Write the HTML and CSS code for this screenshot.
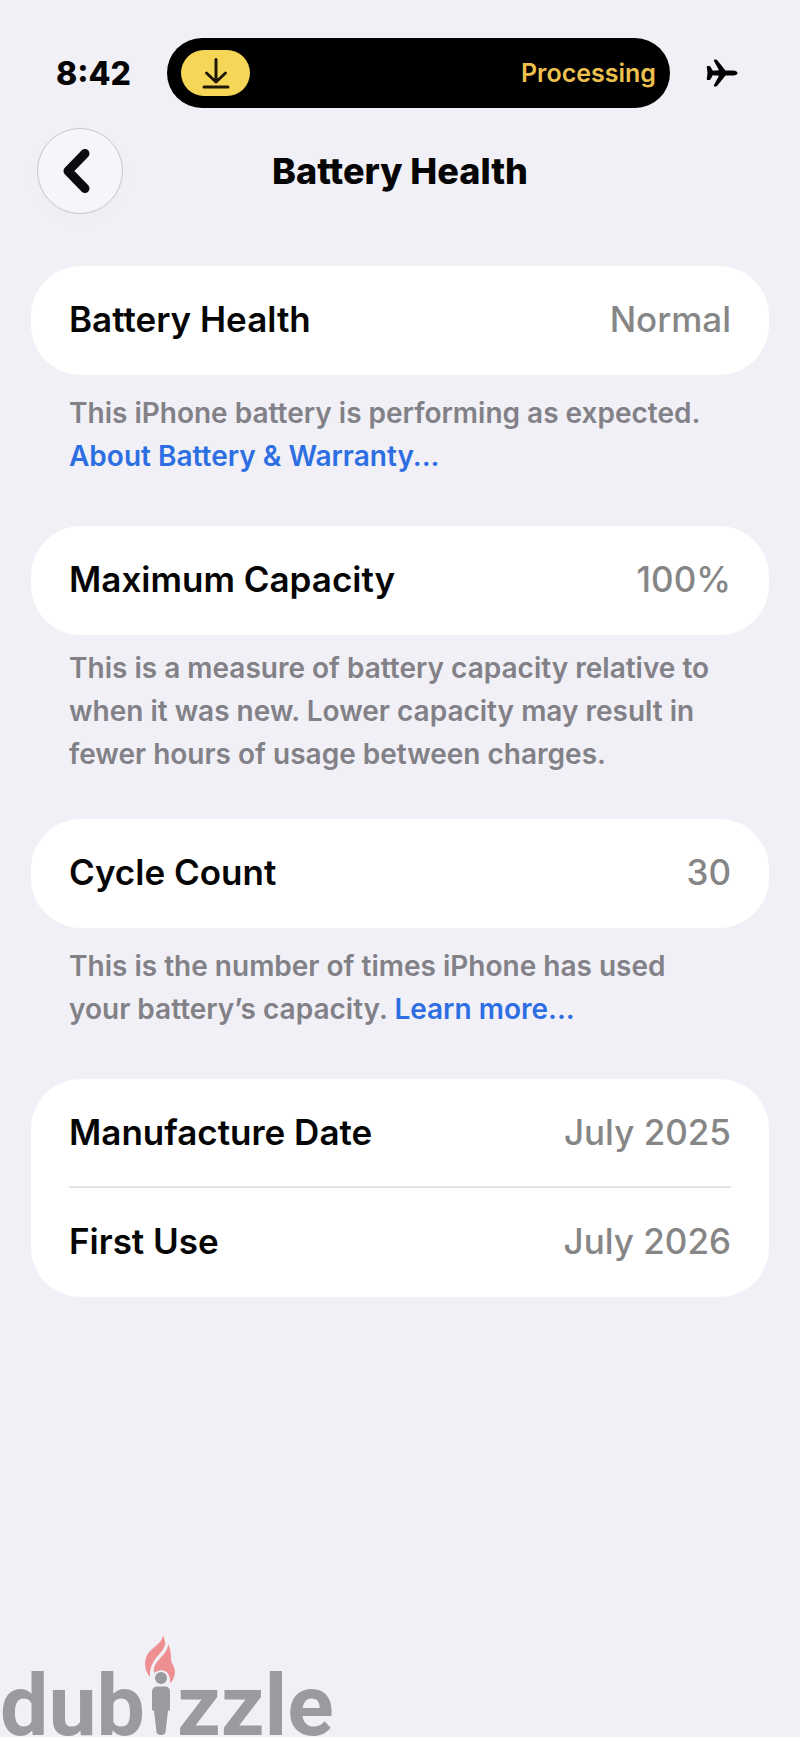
FILE: index.html
```
<!DOCTYPE html>
<html lang="en">
<head>
    <meta charset="UTF-8">
    <meta name="viewport" content="width=device-width, initial-scale=1.0">
    <title>Battery Health</title>
    <link rel="stylesheet" href="styles.css">
</head>
<body>

    <div class="status-bar">
        <time class="clock">8:42</time>
        <div class="island">
            <span class="island-pill">
                <svg width="28" height="32" viewBox="0 0 28 32" fill="none" stroke="#1c1805" stroke-width="3" stroke-linecap="round" stroke-linejoin="round">
                    <path d="M14 2.500V24.500M4.500 16L14 25L23.500 16M2 30H26" />
                </svg>
            </span>
            <span class="island-text">Processing</span>
        </div>
        <svg class="airplane" width="32" height="28" viewBox="0 0 32 28">
            <path d="M1.500 7H3.200Q4 7 4.500 7.700L6.800 11.700L13 11.300L8 2Q7.300 .5 8.800 .5H9.800Q10.600 .5 11.300 1.300L19.500 11.500H27Q31.500 12 31.500 14Q31.500 16 27 16.500H19.500L11.300 26.700Q10.600 27.500 9.800 27.500H8.800Q7.300 27.500 8 26L13 16.700L6.800 16.300L4.500 20.300Q4 21 3.200 21H1.500Q.8 21 .8 20L1.500 14L.8 8Q.8 7 1.500 7Z" />
        </svg>
    </div>

    <header class="nav-bar">
        <button class="back" type="button" aria-label="Back">
            <svg width="28" height="44" viewBox="0 0 28 44" fill="none" stroke="#0c0c0e" stroke-width="9" stroke-linecap="round" stroke-linejoin="round">
                <path d="M23 4.500L6 22L23 39.500" />
            </svg>
        </button>
        <h1>Battery Health</h1>
    </header>

    <main>
        <section>
            <dl class="card">
                <div class="row"><dt>Battery Health</dt><dd>Normal</dd></div>
            </dl>
            <p class="note">This iPhone battery is performing as expected. <a href="#warranty">About Battery &amp; Warranty...</a></p>
        </section>

        <section>
            <dl class="card">
                <div class="row"><dt>Maximum Capacity</dt><dd>100%</dd></div>
            </dl>
            <p class="note note-tight">This is a measure of battery capacity relative to when it was new. Lower capacity may result in fewer hours of usage between charges.</p>
        </section>

        <section>
            <dl class="card">
                <div class="row"><dt>Cycle Count</dt><dd>30</dd></div>
            </dl>
            <p class="note">This is the number of times iPhone has used your battery’s capacity. <a href="#cycles">Learn more...</a></p>
        </section>

        <section>
            <dl class="card">
                <div class="row"><dt>Manufacture Date</dt><dd>July 2025</dd></div>
                <div class="row"><dt>First Use</dt><dd>July 2026</dd></div>
            </dl>
        </section>
    </main>

    <footer class="brand">
        <span>dub</span>
        <svg width="32" height="102" viewBox="0 0 32 102">
            <!-- flame -->
            <path fill="#ee8f91" d="M18 0C19 4 21 7 20 10C18 19 4 24 5 42C0 36-1 29 1 23C4 13 17 10 18 0Z" />
            <path fill="#ee8f91" d="M23 9C28 18 24 24 28 30C32 37 29 45 25 48C26 36 17 32 9 38C7 25 23 21 23 9Z" />
            <!-- torch bearer -->
            <g fill="#9b9aa0">
                <circle cx="16" cy="43" r="6" />
                <path d="M12 51.500H21Q25 52 25 57V74Q25 76 23 76L20.500 97Q20 100 16 100Q12 100 11.500 97L9 76Q7 76 7 74V57Q7 52 12 51.500Z" />
            </g>
        </svg>
        <span>zzle</span>
    </footer>

</body>
</html>
```

FILE: styles.css
```
:root {
    --bg: #f1f0f6;
    --label: #050505;
    --value: #868686;
    --note: #828187;
    --link: #2d6fe3;
    --gutter: 31px;
    --inset: 38px;
}

* {
    box-sizing: border-box;
}

body {
    margin: 0;
    min-height: 100vh;
    display: flex;
    flex-direction: column;
    background-color: var(--bg);
    color: var(--label);
    font-family: Inter, "Liberation Sans", Arial, sans-serif;
}

.status-bar {
    display: grid;
    grid-template-columns: 167px 1fr 130px;
    align-items: center;
    padding-top: 38px;
}

.clock {
    padding-left: 56px;
    font-size: 32px;
    font-weight: 800;
}

.island {
    height: 70px;
    padding: 0 14px;
    display: flex;
    align-items: center;
    justify-content: space-between;
    background-color: black;
    border-radius: 35px;
}

.island-pill {
    width: 69px;
    height: 46px;
    display: flex;
    align-items: center;
    justify-content: center;
    background-color: #f5d657;
    border-radius: 23px;
}

.island-text {
    color: #ecc04d;
    font-size: 25px;
    font-weight: 600;
}

.airplane {
    margin-left: 36px;
}

.nav-bar {
    display: grid;
    grid-template-columns: 86px 1fr 86px;
    align-items: center;
    padding: 20px 37px 52px;
}

.nav-bar h1 {
    margin: 0;
    text-align: center;
    font-size: 36px;
    font-weight: 800;
}

.back {
    width: 86px;
    height: 86px;
    padding: 0 8px 0 0;
    display: flex;
    align-items: center;
    justify-content: center;
    background-color: #f6f5fb;
    border: 1px solid #c9c8ce;
    border-radius: 50%;
    box-shadow: 0 6px 18px rgba(0, 0, 0, 0.02);
}

main {
    padding: 0 var(--gutter);
}

.card {
    margin: 0;
    padding: 0 var(--inset);
    background-color: white;
    border-radius: 50px;
}

.row {
    height: 109px;
    padding-bottom: 4px;
    display: flex;
    align-items: center;
    justify-content: space-between;
    font-size: 35px;
    font-weight: 500;
}

.row dt {
    font-weight: 600;
}

.row:not(:last-child) {
    padding-bottom: 2px;
    border-bottom: 2px solid #e4e4e6;
}

.row dd {
    margin: 0;
    color: var(--value);
}

.note {
    margin: 0;
    padding: 17px var(--inset) 48px;
    color: var(--note);
    font-size: 28px;
    font-weight: 600;
    line-height: 43px;
}

.note-tight {
    padding-top: 12px;
    padding-bottom: 43px;
}

.note a {
    color: var(--link);
    text-decoration: none;
}

.brand {
    height: 102px;
    margin-top: auto;
    display: flex;
    align-items: flex-end;
    overflow: hidden;
    color: #9b9aa0;
    font-family: Roboto, "Liberation Sans", sans-serif;
    font-size: 86px;
    font-weight: 700;
    line-height: 62px;
}
```
